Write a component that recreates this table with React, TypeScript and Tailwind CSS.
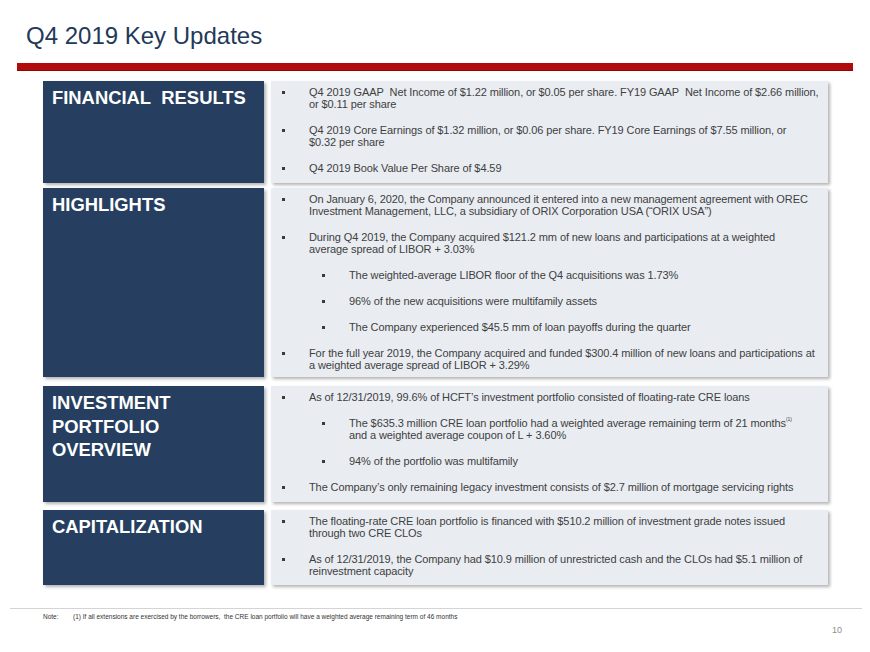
import React from 'react';

type Item = { text: React.ReactNode; level?: 1 | 2 };

const sections: { title: React.ReactNode; height: string; gap: string; items: Item[] }[] = [
  {
    title: 'FINANCIAL\u00a0 RESULTS',
    height: 'h-[102px]',
    gap: 'mt-0',
    items: [
      { text: 'Q4 2019 GAAP\u00a0 Net Income of $1.22 million, or $0.05 per share. FY19 GAAP\u00a0 Net Income of $2.66 million, or $0.11 per share' },
      {
        text: (
          <>
            Q4 2019 Core Earnings of $1.32 million, or $0.06 per share. FY19 Core Earnings of $7.55 million, or
            <br />
            $0.32 per share
          </>
        ),
      },
      { text: 'Q4 2019 Book Value Per Share of $4.59' },
    ],
  },
  {
    title: 'HIGHLIGHTS',
    height: 'h-[189px]',
    gap: 'mt-[5px]',
    items: [
      { text: 'On January 6, 2020, the Company announced it entered into a new management agreement with OREC Investment Management, LLC, a subsidiary of ORIX Corporation USA (\u201cORIX USA\u201d)' },
      {
        text: (
          <>
            During Q4 2019, the Company acquired $121.2 mm of new loans and participations at a weighted
            <br />
            average spread of LIBOR + 3.03%
          </>
        ),
      },
      { text: 'The weighted-average LIBOR floor of the Q4 acquisitions was 1.73%', level: 2 },
      { text: '96% of the new acquisitions were multifamily assets', level: 2 },
      { text: 'The Company experienced $45.5 mm of loan payoffs during the quarter', level: 2 },
      { text: 'For the full year 2019, the Company acquired and funded $300.4 million of new loans and participations at a weighted average spread of LIBOR + 3.29%' },
    ],
  },
  {
    title: (
      <>
        INVESTMENT
        <br />
        PORTFOLIO
        <br />
        OVERVIEW
      </>
    ),
    height: 'h-[116px]',
    gap: 'mt-[9px]',
    items: [
      { text: 'As of 12/31/2019, 99.6% of HCFT\u2019s investment portfolio consisted of floating-rate CRE loans' },
      {
        text: (
          <>
            The $635.3 million CRE loan portfolio had a weighted average remaining term of 21 months
            <sup className="text-[5px] align-[4px]">(1)</sup>
            <br />
            and a weighted average coupon of L + 3.60%
          </>
        ),
        level: 2,
      },
      { text: '94% of the portfolio was multifamily', level: 2 },
      { text: 'The Company\u2019s only remaining legacy investment consists of $2.7 million of mortgage servicing rights' },
    ],
  },
  {
    title: 'CAPITALIZATION',
    height: 'h-[75px]',
    gap: 'mt-[8px]',
    items: [
      { text: 'The floating-rate CRE loan portfolio is financed with $510.2 million of investment grade notes issued through two CRE CLOs' },
      { text: 'As of 12/31/2019, the Company had $10.9 million of unrestricted cash and the CLOs had $5.1 million of reinvestment capacity' },
    ],
  },
];

function Bullet({ item }: { item: Item }) {
  const sub = item.level === 2;
  return (
    <li className={`flex ${sub ? 'pl-[51px]' : 'pl-[11px]'} [&+li]:mt-[14px]`}>
      <span className="w-[27px] shrink-0 flex items-start pt-[5px]">
        <span className="block w-[3px] h-[3px] bg-[#3a3a3a]" />
      </span>
      <span className="leading-[12px] pr-[6px]">{item.text}</span>
    </li>
  );
}

export default function App() {
  return (
    <div className="w-[870px] h-[652px] bg-white flex flex-col font-['Liberation_Sans',Arial,sans-serif] overflow-hidden">
      <h1 className="pl-[26px] pt-[22px] text-[24px] leading-[28px] text-[#22395a]">Q4 2019 Key Updates</h1>
      <div className="ml-[17px] mt-[13px] w-[836px] h-[8px] bg-[#b20b0b] border-b border-[#8d0707]" />
      <div className="ml-[43px] mt-[10px] flex flex-col">
        {sections.map((s, i) => (
          <div key={i} className={`flex gap-[7px] ${s.height} ${s.gap}`}>
            <div className="w-[221px] shrink-0 bg-[#263f60] shadow-[2px_2px_3px_rgba(0,0,0,0.3)] pl-[9px] pt-[5px]">
              <div className="text-white font-bold text-[18.4px] leading-[23.5px]">{s.title}</div>
            </div>
            <div className="w-[557px] bg-[#e9edf2] shadow-[2px_2px_3px_rgba(0,0,0,0.3)] pt-[5px]">
              <ul className="text-[11px] text-[#404040] tracking-[-0.1px]">
                {s.items.map((it, j) => (
                  <Bullet key={j} item={it} />
                ))}
              </ul>
            </div>
          </div>
        ))}
      </div>
      <div className="ml-[10px] mt-[23px] w-[852px] border-t border-[#d4d4d4]" />
      <div className="flex pl-[43px] pt-[4px] text-[6.5px] leading-[8px] text-[#333]">
        <span className="w-[30px]">Note:</span>
        <span>(1) If all extensions are exercised by the borrowers,&nbsp; the CRE loan portfolio will have a weighted average remaining term of 46 months</span>
      </div>
      <div className="pl-[832px] pt-[3px] text-[9px] text-[#8c8c8c]">10</div>
    </div>
  );
}
